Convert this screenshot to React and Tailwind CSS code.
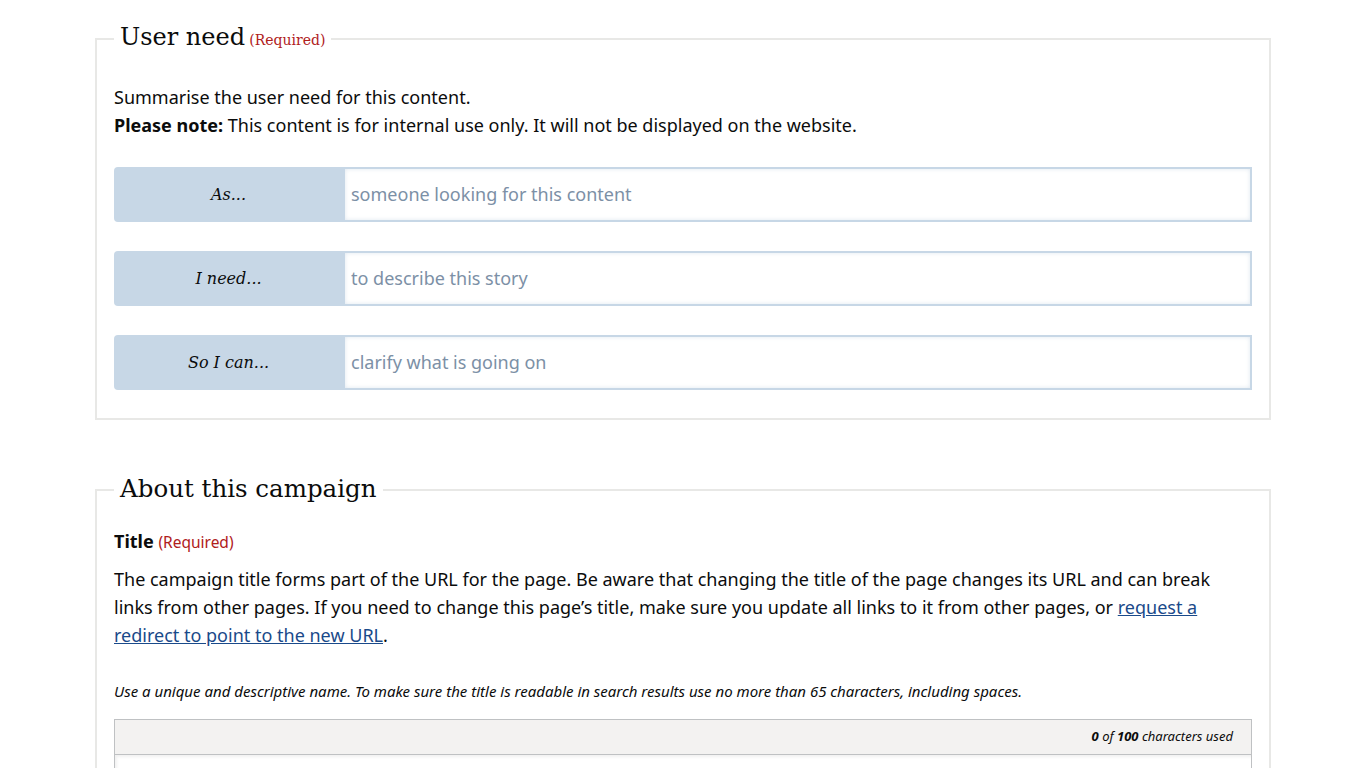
export default function App() {
  const rows = [
    { label: 'As...', placeholder: 'someone looking for this content' },
    { label: 'I need...', placeholder: 'to describe this story' },
    { label: 'So I can...', placeholder: 'clarify what is going on' },
  ]

  return (
    <div className="min-h-screen bg-white text-[#0b0c0c] font-['Noto_Sans',sans-serif]">
      <div className="w-[1176px] mx-auto pt-[20px]">
        {/* User need */}
        <fieldset className="border-2 border-[#e8e8e6] px-[17px] pb-[28px]">
          <legend className="px-1.5 leading-[35px]">
            <span className="font-['DejaVu_Serif',serif] text-[24px]">User need</span>{' '}
            <span className="font-['DejaVu_Serif',serif] text-[14px] text-[#b0201b]">(Required)</span>
          </legend>
          <div className="mt-[25px] text-[18px] leading-[28px]">
            <p>Summarise the user need for this content.</p>
            <p>
              <strong className="font-bold">Please note:</strong> This content is for internal use only. It will not be displayed on the website.
            </p>
          </div>
          <div className="mt-[28px] flex flex-col gap-[29px]">
            {rows.map((row) => (
              <div key={row.label} className="flex h-[55px]">
                <div className="w-[229px] shrink-0 bg-[#c7d7e6] rounded-l-[4px] flex items-center justify-center font-['DejaVu_Serif',serif] italic text-[16px]">
                  {row.label}
                </div>
                <input
                  className="flex-1 border-2 border-[#c7d7e6] shadow-[inset_0_0_4px_rgba(160,185,210,0.35)] px-[6px] text-[18px] outline-none placeholder:text-[#7c90a6]"
                  placeholder={row.placeholder}
                />
              </div>
            ))}
          </div>
        </fieldset>

        {/* About this campaign */}
        <fieldset className="mt-[51px] border-2 border-b-0 border-[#e8e8e6] px-[17px] pb-10">
          <legend className="px-1.5 leading-[35px]">
            <span className="font-['DejaVu_Serif',serif] text-[24.5px]">About this campaign</span>
          </legend>
          <div className="mt-[18px] text-[18px] leading-[28px]">
            <strong className="font-bold">Title</strong>{' '}
            <span className="text-[15.5px] text-[#b0201b]">(Required)</span>
          </div>
          <p className="mt-[9px] text-[18px] leading-[28px]">
            The campaign title forms part of the URL for the page. Be aware that changing the title of the page changes its URL and can break links from other pages. If you need to change this page’s title, make sure you update all links to it from other pages, or{' '}
            <a href="#" className="text-[#1a4a8a] underline">request a redirect to point to the new URL</a>.
          </p>
          <p className="mt-[32px] text-[15px] leading-[20px] italic">
            Use a unique and descriptive name. To make sure the title is readable in search results use no more than 65 characters, including spaces.
          </p>
          <div className="mt-[18px] border border-[#bfc1c3]">
            <div className="h-[35px] bg-[#f3f2f1] border-b border-[#bfc1c3] flex items-center justify-end px-[18px] text-[13px] italic">
              <span><b>0</b> of <b>100</b> characters used</span>
            </div>
            <textarea className="block w-full h-[80px] shadow-[inset_2px_2px_3px_rgba(0,0,0,0.06)] outline-none" />
          </div>
        </fieldset>
      </div>
    </div>
  )
}
